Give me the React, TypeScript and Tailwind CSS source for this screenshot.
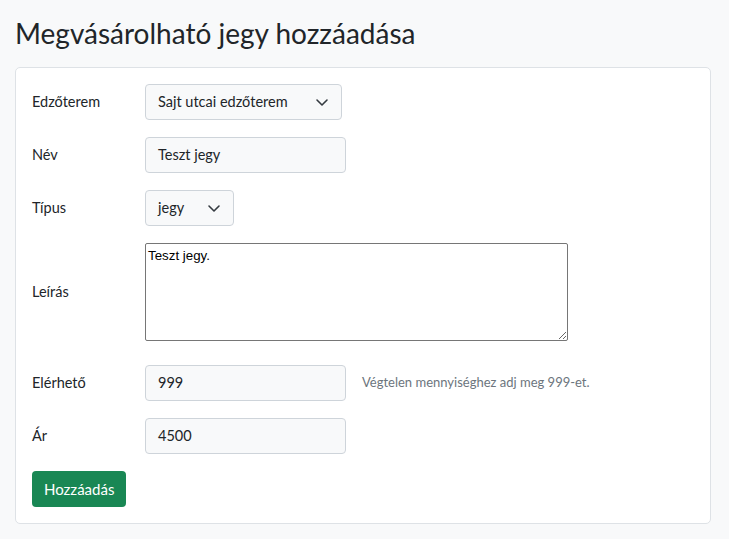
const font = { fontFamily: 'Lato, "Noto Sans", sans-serif' };

const Chevron = () => (
  <svg width="14" height="10" viewBox="0 0 14 10" className="text-[#343a40]">
    <path d="M2 3l5 5 5-5" fill="none" stroke="currentColor" strokeWidth="1.6" strokeLinecap="round" strokeLinejoin="round" />
  </svg>
);

const Row = ({ label, children }: { label: string; children: React.ReactNode }) => (
  <div className="flex items-center">
    <div className="w-[113px] text-[14.5px] text-[#212529]">{label}</div>
    {children}
  </div>
);

const Select = ({ value, width }: { value: string; width: string }) => (
  <div className={`${width} h-[36px] flex items-center justify-between pl-[12px] pr-[12px] bg-[#f8f9fa] border border-[#ced4da] rounded-[4px] text-[14.5px] text-[#212529]`}>
    <span>{value}</span>
    <Chevron />
  </div>
);

const Input = ({ value }: { value: string }) => (
  <div className="w-[201px] h-[36px] flex items-center px-[12px] bg-[#f8f9fa] border border-[#ced4da] rounded-[4px] text-[14.5px] text-[#212529]">
    {value}
  </div>
);

export default function App() {
  return (
    <div className="min-h-[539px] bg-[#f8f9fa] px-[15px] pt-[15px]" style={font}>
      <h1 className="text-[28px] leading-[36px] text-[#212529] mb-[16px]">Megvásárolható jegy hozzáadása</h1>
      <div className="w-[696px] bg-white border border-[#dee2e6] rounded-[5px] px-[16px] pt-[16px] pb-[16px]">
        <div className="flex flex-col gap-[17px]">
          <Row label="Edzőterem">
            <Select value="Sajt utcai edzőterem" width="w-[197px]" />
          </Row>
          <Row label="Név">
            <Input value="Teszt jegy" />
          </Row>
          <Row label="Típus">
            <Select value="jegy" width="w-[89px]" />
          </Row>
          <Row label="Leírás">
            <textarea
              readOnly
              defaultValue="Teszt jegy."
              className="w-[423px] h-[98px] border border-[#767676] rounded-[2px] px-[2px] pt-[2px] text-[13.33px] text-black resize-y"
              style={{ fontFamily: '"Liberation Sans", Arial, sans-serif' }}
            />
          </Row>
          <div className="flex items-center mt-[7px]">
            <div className="w-[113px] text-[14.5px] text-[#212529]">Elérhető</div>
            <Input value="999" />
            <div className="ml-[16px] text-[13px] text-[#6c757d]">Végtelen mennyiséghez adj meg 999-et.</div>
          </div>
          <Row label="Ár">
            <Input value="4500" />
          </Row>
          <div>
            <button className="h-[36px] px-[12px] bg-[#198754] rounded-[4px] text-white text-[15px]">Hozzáadás</button>
          </div>
        </div>
      </div>
    </div>
  );
}
